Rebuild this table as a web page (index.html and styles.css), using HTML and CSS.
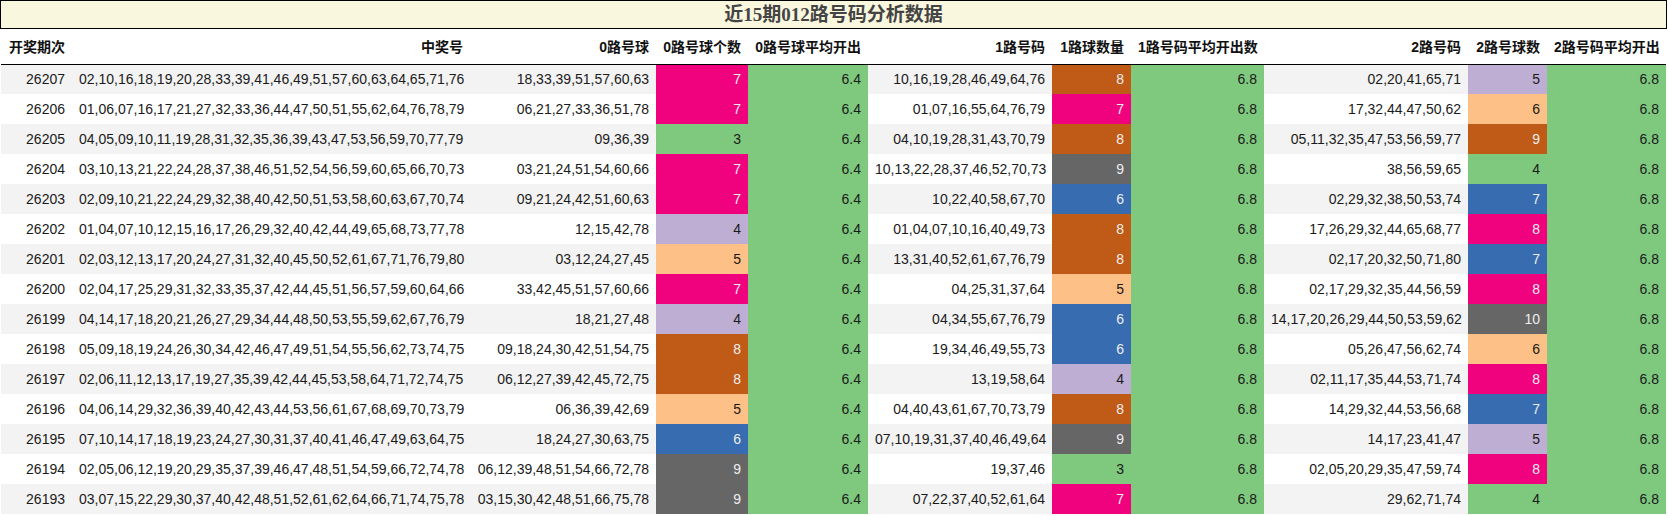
FILE: index.html
```html
<!DOCTYPE html>
<html lang="zh">
<head>
<meta charset="utf-8">
<title>近15期012路号码分析数据</title>
<link rel="stylesheet" href="styles.css">
</head>
<body>
<div class="page">
  <div class="title">近15期012路号码分析数据</div>
  <table class="data">
    <colgroup>
      <col class="w-period"><col class="w-win"><col class="w-r0"><col class="w-n0"><col class="w-a0">
      <col class="w-r1"><col class="w-n1"><col class="w-a1"><col class="w-r2"><col class="w-n2"><col class="w-a2">
    </colgroup>
    <thead>
      <tr>
        <th>开奖期次</th><th>中奖号</th><th>0路号球</th><th>0路号球个数</th><th>0路号球平均开出</th>
        <th>1路号码</th><th>1路球数量</th><th>1路号码平均开出数</th><th>2路号码</th><th>2路号球数</th><th>2路号码平均开出</th>
      </tr>
    </thead>
    <tbody>
      <tr><td>26207</td><td>02,10,16,18,19,20,28,33,39,41,46,49,51,57,60,63,64,65,71,76</td><td>18,33,39,51,57,60,63</td><td class="c-pink">7</td><td class="c-green">6.4</td><td>10,16,19,28,46,49,64,76</td><td class="c-brown">8</td><td class="c-green">6.8</td><td>02,20,41,65,71</td><td class="c-lav">5</td><td class="c-green">6.8</td></tr>
      <tr><td>26206</td><td>01,06,07,16,17,21,27,32,33,36,44,47,50,51,55,62,64,76,78,79</td><td>06,21,27,33,36,51,78</td><td class="c-pink">7</td><td class="c-green">6.4</td><td>01,07,16,55,64,76,79</td><td class="c-pink">7</td><td class="c-green">6.8</td><td>17,32,44,47,50,62</td><td class="c-peach">6</td><td class="c-green">6.8</td></tr>
      <tr><td>26205</td><td>04,05,09,10,11,19,28,31,32,35,36,39,43,47,53,56,59,70,77,79</td><td>09,36,39</td><td class="c-green">3</td><td class="c-green">6.4</td><td>04,10,19,28,31,43,70,79</td><td class="c-brown">8</td><td class="c-green">6.8</td><td>05,11,32,35,47,53,56,59,77</td><td class="c-brown">9</td><td class="c-green">6.8</td></tr>
      <tr><td>26204</td><td>03,10,13,21,22,24,28,37,38,46,51,52,54,56,59,60,65,66,70,73</td><td>03,21,24,51,54,60,66</td><td class="c-pink">7</td><td class="c-green">6.4</td><td>10,13,22,28,37,46,52,70,73</td><td class="c-gray">9</td><td class="c-green">6.8</td><td>38,56,59,65</td><td class="c-green">4</td><td class="c-green">6.8</td></tr>
      <tr><td>26203</td><td>02,09,10,21,22,24,29,32,38,40,42,50,51,53,58,60,63,67,70,74</td><td>09,21,24,42,51,60,63</td><td class="c-pink">7</td><td class="c-green">6.4</td><td>10,22,40,58,67,70</td><td class="c-blue">6</td><td class="c-green">6.8</td><td>02,29,32,38,50,53,74</td><td class="c-blue">7</td><td class="c-green">6.8</td></tr>
      <tr><td>26202</td><td>01,04,07,10,12,15,16,17,26,29,32,40,42,44,49,65,68,73,77,78</td><td>12,15,42,78</td><td class="c-lav">4</td><td class="c-green">6.4</td><td>01,04,07,10,16,40,49,73</td><td class="c-brown">8</td><td class="c-green">6.8</td><td>17,26,29,32,44,65,68,77</td><td class="c-pink">8</td><td class="c-green">6.8</td></tr>
      <tr><td>26201</td><td>02,03,12,13,17,20,24,27,31,32,40,45,50,52,61,67,71,76,79,80</td><td>03,12,24,27,45</td><td class="c-peach">5</td><td class="c-green">6.4</td><td>13,31,40,52,61,67,76,79</td><td class="c-brown">8</td><td class="c-green">6.8</td><td>02,17,20,32,50,71,80</td><td class="c-blue">7</td><td class="c-green">6.8</td></tr>
      <tr><td>26200</td><td>02,04,17,25,29,31,32,33,35,37,42,44,45,51,56,57,59,60,64,66</td><td>33,42,45,51,57,60,66</td><td class="c-pink">7</td><td class="c-green">6.4</td><td>04,25,31,37,64</td><td class="c-peach">5</td><td class="c-green">6.8</td><td>02,17,29,32,35,44,56,59</td><td class="c-pink">8</td><td class="c-green">6.8</td></tr>
      <tr><td>26199</td><td>04,14,17,18,20,21,26,27,29,34,44,48,50,53,55,59,62,67,76,79</td><td>18,21,27,48</td><td class="c-lav">4</td><td class="c-green">6.4</td><td>04,34,55,67,76,79</td><td class="c-blue">6</td><td class="c-green">6.8</td><td>14,17,20,26,29,44,50,53,59,62</td><td class="c-gray">10</td><td class="c-green">6.8</td></tr>
      <tr><td>26198</td><td>05,09,18,19,24,26,30,34,42,46,47,49,51,54,55,56,62,73,74,75</td><td>09,18,24,30,42,51,54,75</td><td class="c-brown">8</td><td class="c-green">6.4</td><td>19,34,46,49,55,73</td><td class="c-blue">6</td><td class="c-green">6.8</td><td>05,26,47,56,62,74</td><td class="c-peach">6</td><td class="c-green">6.8</td></tr>
      <tr><td>26197</td><td>02,06,11,12,13,17,19,27,35,39,42,44,45,53,58,64,71,72,74,75</td><td>06,12,27,39,42,45,72,75</td><td class="c-brown">8</td><td class="c-green">6.4</td><td>13,19,58,64</td><td class="c-lav">4</td><td class="c-green">6.8</td><td>02,11,17,35,44,53,71,74</td><td class="c-pink">8</td><td class="c-green">6.8</td></tr>
      <tr><td>26196</td><td>04,06,14,29,32,36,39,40,42,43,44,53,56,61,67,68,69,70,73,79</td><td>06,36,39,42,69</td><td class="c-peach">5</td><td class="c-green">6.4</td><td>04,40,43,61,67,70,73,79</td><td class="c-brown">8</td><td class="c-green">6.8</td><td>14,29,32,44,53,56,68</td><td class="c-blue">7</td><td class="c-green">6.8</td></tr>
      <tr><td>26195</td><td>07,10,14,17,18,19,23,24,27,30,31,37,40,41,46,47,49,63,64,75</td><td>18,24,27,30,63,75</td><td class="c-blue">6</td><td class="c-green">6.4</td><td>07,10,19,31,37,40,46,49,64</td><td class="c-gray">9</td><td class="c-green">6.8</td><td>14,17,23,41,47</td><td class="c-lav">5</td><td class="c-green">6.8</td></tr>
      <tr><td>26194</td><td>02,05,06,12,19,20,29,35,37,39,46,47,48,51,54,59,66,72,74,78</td><td>06,12,39,48,51,54,66,72,78</td><td class="c-gray">9</td><td class="c-green">6.4</td><td>19,37,46</td><td class="c-green">3</td><td class="c-green">6.8</td><td>02,05,20,29,35,47,59,74</td><td class="c-pink">8</td><td class="c-green">6.8</td></tr>
      <tr><td>26193</td><td>03,07,15,22,29,30,37,40,42,48,51,52,61,62,64,66,71,74,75,78</td><td>03,15,30,42,48,51,66,75,78</td><td class="c-gray">9</td><td class="c-green">6.4</td><td>07,22,37,40,52,61,64</td><td class="c-pink">7</td><td class="c-green">6.8</td><td>29,62,71,74</td><td class="c-green">4</td><td class="c-green">6.8</td></tr>
    </tbody>
  </table>
</div>
</body>
</html>
```

FILE: styles.css
```css
html, body {
  margin: 0;
  padding: 0;
  background: #ffffff;
}

.page {
  width: 1667px;
  font-family: "Liberation Sans", "Noto Sans CJK SC", sans-serif;
  font-size: 14px;
  color: #1a1a1a;
}

.title {
  height: 27px;
  line-height: 28px;
  border: 1px solid #000;
  background: #f9f7de;
  text-align: center;
  font-family: "Liberation Serif", "Noto Sans CJK SC", serif;
  font-weight: bold;
  font-size: 19px;
  color: #444;
}

.data {
  margin-left: 1px;
  width: 1665px;
  table-layout: fixed;
  border-collapse: collapse;
  border-spacing: 0;
}

.w-period { width: 71px; }
.w-win { width: 398px; }
.w-r0 { width: 186px; }
.w-n0 { width: 92px; }
.w-a0 { width: 120px; }
.w-r1 { width: 184px; }
.w-n1 { width: 79px; }
.w-a1 { width: 133px; }
.w-r2 { width: 204px; }
.w-n2 { width: 79px; }
.w-a2 { width: 119px; }

.data th {
  height: 35px;
  padding: 0 7px;
  text-align: right;
  font-weight: bold;
  white-space: nowrap;
  color: #111;
  border-bottom: 1px solid #000;
  box-sizing: border-box;
}

.data td {
  height: 30px;
  padding: 0 7px;
  text-align: right;
  white-space: nowrap;
  box-sizing: border-box;
}

.data tbody tr:nth-child(odd) { background: #f3f3f3; }
.data tbody tr:nth-child(even) { background: #ffffff; }

.data td.c-green { background: #7fc97f; color: #1a1a1a; }
.data td.c-lav { background: #beaed4; color: #1a1a1a; }
.data td.c-peach { background: #fdc086; color: #1a1a1a; }
.data td.c-blue { background: #386cb0; color: #eeeeee; }
.data td.c-pink { background: #f0027f; color: #eeeeee; }
.data td.c-brown { background: #bf5b17; color: #eeeeee; }
.data td.c-gray { background: #666666; color: #eeeeee; }
```
